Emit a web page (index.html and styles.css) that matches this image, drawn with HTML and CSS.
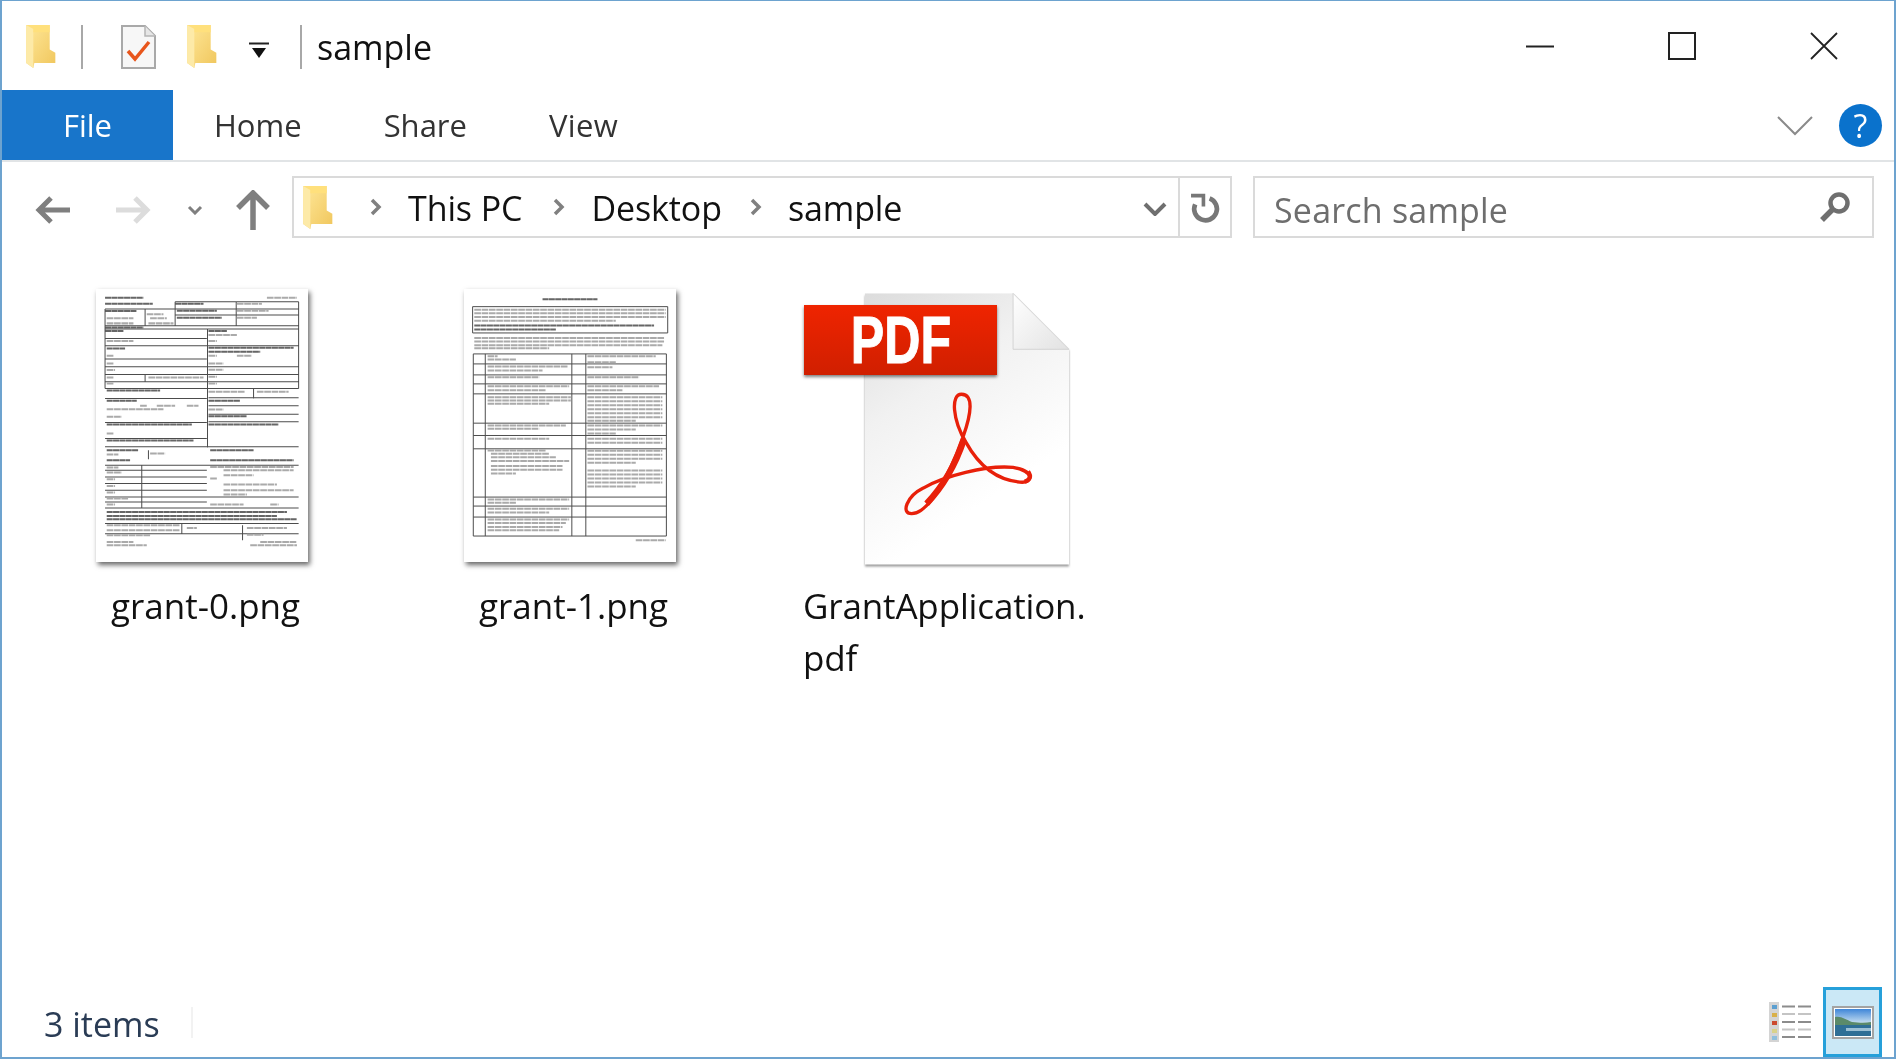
FILE: index.html
```html
<!DOCTYPE html>
<html lang="en">
<head>
<meta charset="utf-8">
<title>sample</title>
<link rel="stylesheet" href="styles.css">
</head>
<body>
<svg class="defs" width="0" height="0" aria-hidden="true">
  <defs>
    <linearGradient id="fg" x1="0" y1="0" x2="1" y2="1"><stop offset="0" stop-color="#ffe89a"/><stop offset="1" stop-color="#f0c65c"/></linearGradient>
    <symbol id="folder" viewBox="0 0 29 42">
      <path d="M0 0H23V24L28.500 27V37H8L7 42L0 37Z" fill="url(#fg)"/>
      <path d="M0 0H7V42L0 37Z" fill="#fdeaa8"/>
      <path d="M0 0L7 4V7H23V0Z" fill="#ffe07c"/>
    </symbol>
  </defs>
</svg>
<div class="window">
  <header class="titlebar">
    <svg class="ico-folder"><use href="#folder"/></svg>
    <span class="qsep first"></span>
    <svg class="ico-doc" viewBox="0 0 35 44"><path d="M1 1H24L34 11V43H1Z" fill="#f7f7f7" stroke="#a9a9a9" stroke-width="2"/><path d="M24 1V11H34" fill="#e6e6e6" stroke="#b5b5b5" stroke-width="1.500"/><path d="M7 26L14 34L28 17" fill="none" stroke="#e8561c" stroke-width="3.500"/></svg>
    <svg class="ico-folder second"><use href="#folder"/></svg>
    <svg class="ico-drop" viewBox="0 0 20 18"><path d="M0 1.500H20" stroke="#222" stroke-width="2"/><path d="M3 6H17L10 16Z" fill="#111"/></svg>
    <span class="qsep"></span>
    <span class="title">sample</span>
    <div class="controls">
      <span class="ctl"><svg width="28" height="28" viewBox="0 0 28 28"><path d="M0 14.500H28" stroke="#222" stroke-width="2"/></svg></span>
      <span class="ctl"><svg width="28" height="28" viewBox="0 0 28 28"><rect x="1" y="1" width="26" height="26" fill="none" stroke="#222" stroke-width="2"/></svg></span>
      <span class="ctl"><svg width="28" height="28" viewBox="0 0 28 28"><path d="M1 1L27 27M27 1L1 27" stroke="#222" stroke-width="1.800"/></svg></span>
    </div>
  </header>

  <nav class="ribbon">
    <span class="tab file">File</span>
    <span class="tab">Home</span>
    <span class="tab">Share</span>
    <span class="tab view">View</span>
    <svg class="collapse" viewBox="0 0 36 20"><path d="M1 1L18 18L35 1" fill="none" stroke="#8a8a8a" stroke-width="2"/></svg>
    <span class="help">?</span>
  </nav>

  <div class="toolbar">
    <svg class="nav back" viewBox="0 0 34 30"><path d="M15 3L3 15L15 27M3 15H34" fill="none" stroke="#7f7f7f" stroke-width="5"/></svg>
    <svg class="nav fwd" viewBox="0 0 34 30"><path d="M19 3L31 15L19 27M31 15H0" fill="none" stroke="#dcdcdc" stroke-width="5"/></svg>
    <svg class="nav recent" viewBox="0 0 16 10"><path d="M2 2L8 8L14 2" fill="none" stroke="#7f7f7f" stroke-width="3"/></svg>
    <svg class="nav up" viewBox="0 0 36 40"><path d="M3 18L18 3L33 18M18 3V40" fill="none" stroke="#7f7f7f" stroke-width="5.500"/></svg>
    <div class="address">
      <svg class="ico-folder small"><use href="#folder"/></svg>
      <svg class="crumb-sep lead" viewBox="0 0 12 18"><path d="M2 2L9 9L2 16" fill="none" stroke="#808080" stroke-width="3.500"/></svg>
      <span class="crumb">This PC</span>
      <svg class="crumb-sep first" viewBox="0 0 12 18"><path d="M2 2L9 9L2 16" fill="none" stroke="#808080" stroke-width="3.500"/></svg>
      <span class="crumb">Desktop</span>
      <svg class="crumb-sep" viewBox="0 0 12 18"><path d="M2 2L9 9L2 16" fill="none" stroke="#808080" stroke-width="3.500"/></svg>
      <span class="crumb">sample</span>
      <svg class="addr-drop" viewBox="0 0 24 14"><path d="M2 2L12 12L22 2" fill="none" stroke="#6f6f6f" stroke-width="4"/></svg>
      <span class="refresh"><svg class="refresh-icon" viewBox="0 0 30 30"><path d="M5 11A11 11 0 1 0 19 5.200" fill="none" stroke="#777" stroke-width="4.500"/><path d="M1 2.500H13V13" fill="none" stroke="#777" stroke-width="3.500"/></svg></span>
    </div>
    <div class="search">
      <span class="placeholder">Search sample</span>
      <svg class="mag" viewBox="0 0 32 32"><circle cx="20" cy="12" r="8.500" fill="none" stroke="#6f6f6f" stroke-width="4.500"/><path d="M14 18L3 29" stroke="#6f6f6f" stroke-width="5.500"/></svg>
    </div>
  </div>

  <main class="items">
    <figure class="item">
      <svg class="sheet" viewBox="48 62 635 818">
        <rect x="48" y="62" width="635" height="818" fill="#fff"/>
        <g class="ink-bold"><path d="M75 88H190M75 106H218M75 128H170M285 106H370M290 127H410M290 148H425M75 177H190M75 188H130M385 188H440M80 240H135M385 238H640M385 250H540M80 366H240M80 397H170M385 397H480M385 443H500M385 468H595M80 468H335M80 516H340M80 545H175M390 545H520M80 575H150M390 575H640M80 730H620M80 742H590M80 752H650"/></g>
        <g class="ink-line"><path d="M75 122H655M285 100H655M285 140H655M75 172H655M75 182H655M382 182V537M75 210H380M75 232H655M75 272H380M75 295H655M75 318H655M75 340H655M75 360H655M75 390H380M385 388H655M385 412H655M385 437H655M385 460H655M75 462H380M75 510H380M75 535H655M75 590H655M185 590V718M75 605H380M75 625H380M75 645H380M75 665H380M75 685H655M75 700H380M75 718H655M75 765H655M75 795H655M305 765V795M487 770V815M75 122V360M655 100V360M285 100V172M468 100V172M195 122V172M195 318V340M520 360V390M205 545V572"/></g>
        <g class="ink-text"><path d="M80 150H160M200 138H250M210 150H260M80 165H160M205 165H280M80 218H160M385 200H470M385 218H410M80 262H100M80 285H100M80 305H105M80 327H100M205 327H370M80 345H100M385 262H410M470 262H515M385 285H430M385 304H430M385 325H410M385 345H410M385 370H495M530 370H625M385 423H430M80 422H250M180 412H200M230 412H285M320 412H355M80 445H125M80 495H100M80 558H115M210 555H255M80 597H115M80 612H125M80 632H105M80 652H105M80 672H105M80 690H145M80 708H105M390 595H640M430 605H640M430 620H520M390 630H410M430 648H590M430 665H640M430 678H500M390 708H490M570 708H595M80 770H300M80 785H300M320 778H350M500 778H620M80 800H210M500 798H550M80 820H160M80 830H200M540 820H650M510 830H650M560 88H650M470 106H545M470 127H565M470 148H530"/></g>
      </svg>
      <figcaption class="label">grant-0.png</figcaption>
    </figure>
    <figure class="item">
      <svg class="sheet" viewBox="45 60 635 820">
        <rect x="45" y="60" width="635" height="820" fill="#fff"/>
        <g class="ink-bold"><path d="M280 91H445M75 170H615M75 182H320"/></g>
        <g class="ink-line"><path d="M70 113H656V192H70ZM72 255H652V802H72ZM108 255V802M368 255V802M410 255V802M72 285H652M72 318H652M72 345H652M72 375H652M72 463H652M72 500H652M72 540H652M72 685H652M72 712H652M72 745H652"/></g>
        <g class="ink-text"><path d="M75 122H650M75 133H650M75 144H650M75 155H500M75 207H645M75 218H645M75 229H640M75 238H300M115 262H145M115 272H200M415 262H620M415 280H500M115 293H355M115 305H280M415 295H490M115 325H270M415 325H570M115 352H360M115 364H290M415 352H630M415 364H520M115 385H365M115 395H365M115 405H300M415 385H640M415 397H640M415 409H640M415 421H640M415 433H640M415 445H640M415 456H560M115 470H350M115 480H270M415 470H640M415 482H560M415 494H500M115 510H300M415 510H640M415 522H640M115 545H290M125 555H300M125 565H320M125 577H360M125 592H340M125 603H340M125 614H200M415 546H640M415 558H640M415 570H640M415 582H560M415 605H640M415 617H640M415 629H640M415 641H640M415 653H560M115 692H360M115 702H200M115 720H360M115 731H300M115 752H360M115 763H350M115 775H340M115 785H330M560 815H650"/></g>
      </svg>
      <figcaption class="label">grant-1.png</figcaption>
    </figure>
    <figure class="item">
      <div class="pdf-icon">
        <svg class="pdf-page" viewBox="255 40 613 815">
          <defs>
            <linearGradient id="pg" x1="0" y1="0" x2=".5" y2="1"><stop offset="0" stop-color="#dcdcdc"/><stop offset=".4" stop-color="#f1f1f1"/><stop offset=".85" stop-color="#fff"/></linearGradient>
            <linearGradient id="fold" x1="0" y1="0" x2="1" y2="1"><stop offset="0" stop-color="#fff"/><stop offset="1" stop-color="#e2e2e2"/></linearGradient>
          </defs>
          <path d="M255 40H700L868 208V855H255Z" fill="url(#pg)"/>
          <path d="M700 40V208H868Z" fill="url(#fold)" stroke="#d4d4d4" stroke-width="3"/>
          <path d="M545 343C512 343 518 420 558 487C590 545 640 600 720 607C765 612 762 572 700 563C620 555 490 590 430 625C380 650 362 702 395 702C440 702 500 610 550 470C575 400 582 343 545 343Z" fill="none" stroke="#e8200a" stroke-width="10"/>
          <path d="M440 672C490 620 525 560 552 480" fill="none" stroke="#e8200a" stroke-width="19"/>
          <path d="M745 575C756 590 750 600 735 606" fill="none" stroke="#e8200a" stroke-width="13"/>
        </svg>
        <span class="pdf-badge"><span class="pdf-word">PDF</span></span>
      </div>
      <figcaption class="label left">GrantApplication.<br>pdf</figcaption>
    </figure>
  </main>

  <footer class="status">
    <span class="count">3 items</span>
    <span class="status-sep"></span>
    <svg class="view-details" viewBox="0 0 42 40">
      <rect x="0" y="0" width="10" height="40" fill="#d4d4d4"/>
      <rect x="3" y="3" width="5" height="4" fill="#5c9fd0"/><rect x="3" y="11" width="5" height="4" fill="#d9b04a"/><rect x="3" y="19" width="5" height="4" fill="#cc4a30"/><rect x="3" y="27" width="5" height="4" fill="#d9d28a"/><rect x="3" y="34" width="5" height="4" fill="#8fbfdc"/>
      <path d="M13 4.500H26M29 4.500H42M13 20H26M29 20H42M13 35H26M29 35H42" stroke="#8c8c8c" stroke-width="2"/>
      <path d="M13 12H26M29 12H42M13 27.500H26M29 27.500H42" stroke="#c4c4c4" stroke-width="2"/>
    </svg>
    <span class="view-large">
      <svg width="42" height="33" viewBox="0 0 42 33">
        <defs><linearGradient id="sky" x1="0" y1="0" x2="0" y2="1"><stop offset="0" stop-color="#3f86d8"/><stop offset="1" stop-color="#cfe4f2"/></linearGradient></defs>
        <rect x="1" y="1" width="40" height="31" fill="#fff" stroke="#a3a3a3" stroke-width="2"/>
        <rect x="3" y="3" width="36" height="15" fill="url(#sky)"/>
        <path d="M3 11C10 10 14 14 20 16C28 17 34 17 39 16V20H3Z" fill="#5b8a6a"/>
        <rect x="3" y="19" width="36" height="11" fill="#2f6f96"/>
        <rect x="14" y="22" width="25" height="3" fill="#9cc0d4"/>
      </svg>
    </span>
  </footer>
</div>
</body>
</html>
```

FILE: styles.css
```css
* { box-sizing: border-box; }
html, body { margin: 0; height: 100%; background: #fff; overflow: hidden; }
.defs { position: absolute; }
.window {
  width: 1896px; height: 1059px;
  display: flex; flex-direction: column;
  background: #fff;
  border: solid #6da3cf; border-width: 1px 2px 2px 2px;
  font-family: "Open Sans", "Noto Sans", sans-serif;
  color: #111;
  filter: blur(.4px);
}
.titlebar { height: 89px; flex: none; display: flex; align-items: center; padding: 2px 0 0 24px; }
.ico-folder { width: 30px; height: 43px; flex: none; }
.ico-folder.second { margin-left: 31px; }
.ico-folder.small { width: 32px; height: 43px; margin-left: 8px; }
.qsep { width: 2px; height: 44px; background: #a8a8a8; flex: none; margin-left: 24px; }
.qsep.first { margin-left: 25px; }
.ico-doc { width: 35px; height: 44px; margin-left: 38px; flex: none; }
.ico-drop { width: 20px; height: 18px; margin-left: 32px; margin-top: 8px; flex: none; }
.titlebar .qsep:not(.first) { margin-left: 31px; }
.title { font-size: 34px; margin-left: 15px; line-height: 1; margin-top: 1px; }
.controls { margin: -2px -1px 0 auto; display: flex; }
.ctl { width: 142px; display: flex; justify-content: center; align-items: center; }

.ribbon { height: 72px; flex: none; display: flex; align-items: center; border-bottom: 2px solid #e1e4e6; }
.tab { font-size: 31px; color: #333; padding: 0 41px; line-height: 70px; height: 70px; }
.tab.view { letter-spacing: .4px; }
.tab.file { background: #1875ca; color: #fff; width: 171px; padding: 0; text-align: center; }
.collapse { width: 36px; height: 20px; margin: 2px 0 0 auto; flex: none; }
.help {
  width: 43px; height: 43px; border-radius: 50%; background: #0a72cc; color: #fff;
  font-size: 32px; line-height: 43px; text-align: center; margin: 0 12px 0 26px; flex: none;
}

.toolbar { height: 88px; flex: none; display: flex; align-items: flex-start; padding-top: 14px; }
.nav { flex: none; align-self: center; margin-top: -6px; }
.back { width: 36px; height: 30px; margin-left: 33px; }
.fwd { width: 36px; height: 30px; margin-left: 44px; }
.recent { width: 16px; height: 10px; margin-left: 36px; }
.up { width: 36px; height: 40px; margin-left: 32px; }
.address {
  width: 940px; height: 62px; margin-left: 21px; flex: none;
  border: 2px solid #dadada; display: flex; align-items: center;
}
.crumb { font-size: 34px; letter-spacing: -.1px; padding-top: 2px; }
.crumb-sep { width: 12px; height: 18px; flex: none; margin: 0 26px 0 28px; }
.crumb-sep.first { margin-left: 31px; }
.crumb-sep.lead { margin: 0 26px 0 36px; }
.addr-drop { width: 24px; height: 14px; margin: 3px 0 0 auto; flex: none; }
.refresh {
  width: 52px; height: 100%; margin-left: 11px; border-left: 2px solid #dadada;
  display: flex; align-items: center; justify-content: center; flex: none;
}
.refresh-icon { width: 31px; height: 31px; margin-top: 3px; }
.search {
  width: 621px; height: 62px; margin-left: 21px; flex: none;
  border: 2px solid #dadada; display: flex; align-items: center; padding: 0 21px 0 19px;
}
.placeholder { font-size: 34px; letter-spacing: .2px; color: #6e6e6e; padding-top: 5px; }
.mag { width: 32px; height: 32px; margin-left: auto; flex: none; }

.items { flex: 1; display: flex; gap: 86px; padding: 39px 0 0 60px; align-items: flex-start; }
.item { margin: 0; width: 282px; flex: none; display: flex; flex-direction: column; align-items: center; }
.sheet { width: 212px; height: 273px; flex: none; margin-right: 2px; box-shadow: 2px 3px 5px rgba(0,0,0,.6); background: #fff; filter: blur(.7px); }
.ink-line path { fill: none; stroke: #4c4c4c; stroke-width: 3; }
.ink-bold path { fill: none; stroke: #666; stroke-width: 6; stroke-dasharray: 18 1; }
.ink-text path { fill: none; stroke: #aaa; stroke-width: 6; stroke-dasharray: 20 2; }
.label { font-size: 35px; line-height: 52px; color: #111; margin-top: 18px; text-align: center; padding-left: 5px; }
.label.left { text-align: left; align-self: flex-start; margin-left: 5px; margin-top: 14px; padding-left: 0; letter-spacing: -.15px; }
.pdf-icon { position: relative; width: 282px; height: 277px; }
.pdf-page { position: absolute; left: 67px; top: 4px; width: 204px; height: 272px; filter: drop-shadow(0 2px 1px rgba(0,0,0,.4)); }
.pdf-badge {
  position: absolute; left: 6px; top: 16px; width: 193px; height: 70px;
  background: linear-gradient(#ef2400, #d01f00);
  box-shadow: 0 2px 3px rgba(0,0,0,.5);
  color: #fff; font-family: "Liberation Sans", sans-serif;
  font-weight: 700; font-size: 66px; line-height: 70px; text-align: center;
}
.pdf-word { display: inline-block; transform: scaleX(.76); -webkit-text-stroke: 1px #fff; }

.status { height: 70px; flex: none; display: flex; align-items: center; padding-left: 42px; }
.count { font-size: 34px; color: #2a3c55; width: 147px; margin-top: 4px; }
.status-sep { width: 2px; height: 31px; background: #f2f2f2; flex: none; }
.view-details { width: 42px; height: 40px; margin-left: auto; flex: none; }
.view-large {
  width: 59px; height: 70px; margin: 0 12px 0 12px; flex: none;
  background: #cbe8f6; border: 3px solid #26a0da;
  display: flex; align-items: center; justify-content: center;
}
```
